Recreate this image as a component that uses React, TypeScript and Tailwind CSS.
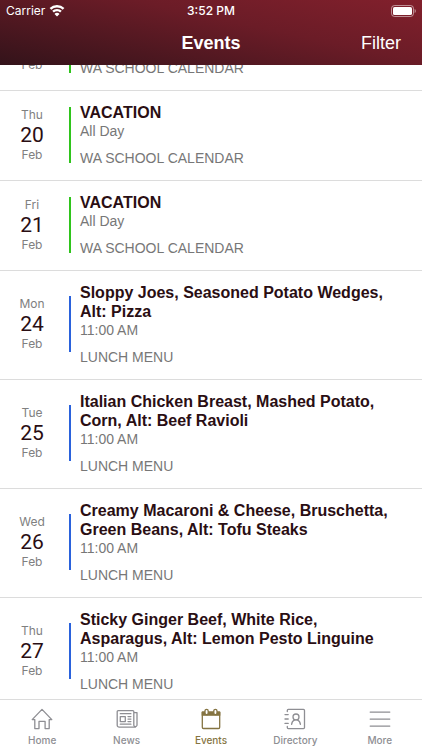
import type { ReactNode } from 'react';

interface CalendarEvent {
  weekday: string;
  day: number;
  month: string;
  title: string;
  time: string;
  calendar: string;
  color: 'green' | 'blue';
}

const events: CalendarEvent[] = [
  { weekday: 'Wed', day: 19, month: 'Feb', title: 'VACATION', time: 'All Day', calendar: 'WA SCHOOL CALENDAR', color: 'green' },
  { weekday: 'Thu', day: 20, month: 'Feb', title: 'VACATION', time: 'All Day', calendar: 'WA SCHOOL CALENDAR', color: 'green' },
  { weekday: 'Fri', day: 21, month: 'Feb', title: 'VACATION', time: 'All Day', calendar: 'WA SCHOOL CALENDAR', color: 'green' },
  { weekday: 'Mon', day: 24, month: 'Feb', title: 'Sloppy Joes, Seasoned Potato Wedges, Alt: Pizza', time: '11:00 AM', calendar: 'LUNCH MENU', color: 'blue' },
  { weekday: 'Tue', day: 25, month: 'Feb', title: 'Italian Chicken Breast, Mashed Potato, Corn, Alt: Beef Ravioli', time: '11:00 AM', calendar: 'LUNCH MENU', color: 'blue' },
  { weekday: 'Wed', day: 26, month: 'Feb', title: 'Creamy Macaroni & Cheese, Bruschetta, Green Beans, Alt: Tofu Steaks', time: '11:00 AM', calendar: 'LUNCH MENU', color: 'blue' },
  { weekday: 'Thu', day: 27, month: 'Feb', title: 'Sticky Ginger Beef, White Rice, Asparagus, Alt: Lemon Pesto Linguine', time: '11:00 AM', calendar: 'LUNCH MENU', color: 'blue' },
];

const barColors = {
  green: 'bg-[#2fc41c]',
  blue: 'bg-[#2a62dc]',
};

function Icon({ children }: { children: ReactNode }) {
  return (
    <svg viewBox="0 0 24 24" className="size-6" fill="none" stroke="currentColor" strokeWidth="1.3" strokeLinecap="round" strokeLinejoin="round" aria-hidden="true">
      {children}
    </svg>
  );
}

const tabs = [
  {
    label: 'Home',
    icon: (
      <Icon>
        <path d="M2.2 11.6 12 1.4l9.8 10.2h-2.6v9h-4.1v-7.2H9v7.2H4.8v-9z" />
      </Icon>
    ),
  },
  {
    label: 'News',
    icon: (
      <Icon>
        <path d="M20.5 19.2H4.2a2 2 0 0 1-2-2V3.6a1 1 0 0 1 1-1h14.6a1 1 0 0 1 1 1v13.8a1.7 1.7 0 0 0 3.2 0V4.6h-3" />
        <path d="M5.3 8.6h5v5h-5zM5.3 5.7h10.6M13 8.6h2.9M13 11.1h2.9M13 13.6h2.9M5.3 16.2h10.6" />
      </Icon>
    ),
  },
  {
    label: 'Events',
    icon: (
      <Icon>
        <path d="M3.3 4.2h17.4v15.1a1.2 1.2 0 0 1-1.2 1.2h-15a1.2 1.2 0 0 1-1.2-1.2z" />
        <path d="M3.3 4.2h17.4v3H3.3z" fill="currentColor" />
        <rect x="6" y="1.3" width="3.2" height="5.4" rx="1.6" fill="white" />
        <rect x="14.8" y="1.3" width="3.2" height="5.4" rx="1.6" fill="white" />
      </Icon>
    ),
  },
  {
    label: 'Directory',
    icon: (
      <Icon>
        <path d="M4.3 3.6V2.4a1 1 0 0 1 1-1h15.2a1 1 0 0 1 1 1v17.2a1 1 0 0 1-1 1H5.3a1 1 0 0 1-1-1v-1.2" />
        <path d="M2 6.6h3.2M2 11h3.2M2 15.4h3.2" />
        <circle cx="13" cy="9" r="3" />
        <path d="M8.6 16.4c.2-2.6 1.4-3.8 3-4.6M17.4 16.4c-.2-2.6-1.4-3.8-3-4.6" />
      </Icon>
    ),
  },
  {
    label: 'More',
    icon: (
      <Icon>
        <path d="M2.2 4.1h19.6M2.2 11.1h19.6M2.2 18.1h19.6" />
      </Icon>
    ),
  },
];

function StatusBar() {
  return (
    <div className="grid grid-cols-3 items-center h-[22px] px-[6px] text-[12px] font-[Inter,sans-serif]">
      <div className="flex items-center gap-1">
        <span>Carrier</span>
        <svg viewBox="0 0 16 12" className="w-4 h-3" fill="currentColor" aria-hidden="true">
          <path d="M8 2.4c2.2 0 4.2.9 5.7 2.3l1.7-1.7A10.6 10.6 0 0 0 8 0 10.6 10.6 0 0 0 .6 3l1.7 1.7A8.2 8.2 0 0 1 8 2.4z" />
          <path d="M8 6.3c1.2 0 2.3.5 3.1 1.2l1.7-1.7A6.9 6.9 0 0 0 8 3.9a6.9 6.9 0 0 0-4.8 1.9l1.7 1.7A4.5 4.5 0 0 1 8 6.3z" />
          <path d="M8 7.8c-1 0-1.900.4-2.500 1.100L8 11.400l2.500-2.500c-.6-.7-1.500-1.100-2.500-1.100z" />
        </svg>
      </div>
      <span className="text-center font-medium">3:52 PM</span>
      <svg viewBox="0 0 26 12" className="justify-self-end w-[26px] h-3" aria-hidden="true">
        <rect x="1.5" y="0.5" width="22" height="11" rx="3" fill="none" stroke="white" strokeOpacity="0.5" />
        <rect x="3" y="2" width="19" height="8" rx="1.6" fill="white" />
        <path d="M24.6 4v4c.8-.3 1.2-1.1 1.2-2s-.4-1.700-1.200-2z" fill="white" fillOpacity="0.5" />
      </svg>
    </div>
  );
}

function EventRow({ event }: { event: CalendarEvent }) {
  return (
    <li className="flex items-center pt-[11px] pb-[13px] border-b border-[#dcdcdc]">
      <div className="w-16 shrink-0 text-center font-[Inter,sans-serif] text-[12px] leading-5 text-[#808080]">
        <div>{event.weekday}</div>
        <div className="font-[Roboto,sans-serif] text-[21px] text-[#2a0e13]">{event.day}</div>
        <div>{event.month}</div>
      </div>
      <div className={`w-0.5 h-14 ml-[5px] mr-[9px] shrink-0 ${barColors[event.color]}`} />
      <div className="self-stretch flex-1 pt-px pr-5 text-[14px] leading-[18px] text-[#777777]">
        <h2 className="text-[16px] leading-[19px] font-bold text-[#2a0e13]">{event.title}</h2>
        <p>{event.time}</p>
        <p className="mt-[9px]">{event.calendar}</p>
      </div>
    </li>
  );
}

export default function App() {
  return (
    <div className="flex flex-col h-screen bg-white font-['Liberation_Sans',Arial,sans-serif]">
      <header className="relative shrink-0 text-white bg-linear-[192deg,#82202c,#6b1c27_40%,#33131a]">
        <StatusBar />
        <div className="grid grid-cols-3 items-center h-[43px] px-[21px]">
          <h1 className="col-start-2 text-center text-[18px] font-bold">Events</h1>
          <button type="button" className="justify-self-end text-[18px]">Filter</button>
        </div>
      </header>

      <main className="flex-1 min-h-0 overflow-hidden">
        {/* list is scrolled past most of the first row */}
        <ul className="-mt-16">
          {events.map((event) => (
            <EventRow key={event.day} event={event} />
          ))}
        </ul>
      </main>

      <nav className="relative grid grid-cols-5 shrink-0 h-[51px] pt-2 bg-white border-t border-[#dcdcdc] font-[Inter,sans-serif]">
        {tabs.map((tab) => (
          <a
            key={tab.label}
            href="#"
            className={`flex flex-col items-center text-[10px] leading-4 font-medium ${tab.label === 'Events' ? 'text-[#857442]' : 'text-[#8e8e93]'}`}
          >
            {tab.icon}
            {tab.label}
          </a>
        ))}
      </nav>
    </div>
  );
}
